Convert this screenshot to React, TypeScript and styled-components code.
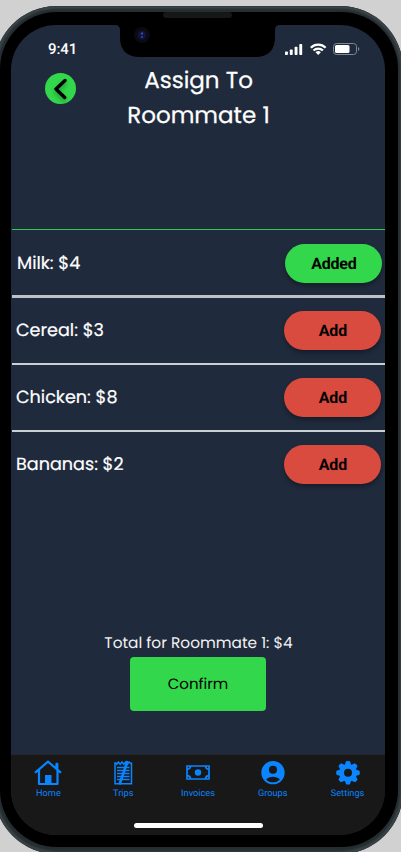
import React from 'react';
import styled, { createGlobalStyle } from 'styled-components';

const GlobalStyle = createGlobalStyle`
  * { box-sizing: border-box; }
  body { margin: 0; background: #d1d1d1; overflow: hidden; text-rendering: geometricPrecision; }
  button { border: 0; padding: 0; margin: 0; cursor: pointer; text-rendering: inherit; }
`;

const geometric = `font-family: Poppins, Inter, sans-serif;`;

const Page = styled.div`
  width: 401px;
  height: 852px;
  overflow: hidden;
  background: #d1d1d1;
  padding-top: 6px;
`;
const Shell = styled.div`
  width: 409px;
  height: 848px;
  margin-left: -6px;
  padding: 6px;
  border-radius: 63px;
  background: #252d30;
  box-shadow: inset 0 0 0 1px #353d40, inset 0 0 3px 2px #475255;
`;
const Bezel = styled.div`
  position: relative;
  width: 398px;
  height: 835px;
  border-radius: 57px;
  background: #000;
  padding: 13px 12px 12px 11px;
`;
const Screen = styled.div`
  width: 374px;
  height: 810px;
  border-radius: 45px;
  overflow: hidden;
  background: #1f2a3c;
  display: flex;
  flex-direction: column;
`;
const Notch = styled.svg`
  position: absolute;
  left: 114px;
  top: 0;
`;
const StatusBar = styled.div`
  display: flex;
  justify-content: space-between;
  height: 48px;
  padding: 16px 25px 0 37px;
`;
const Time = styled.span`
  font: 500 15px/17px Roboto, sans-serif;
  letter-spacing: -0.1px;
  color: #fff;
`;
const Header = styled.header`
  display: flex;
  height: 156px;
  align-items: flex-start;
`;
const BackButton = styled.button`
  width: 31px;
  height: 31px;
  margin-left: 34px;
  border-radius: 50%;
  background: #32d74b;
  flex: none;
  svg { display: block; filter: drop-shadow(0 3px 2px rgba(0, 0, 0, 0.3)); }
`;
const Title = styled.h1`
  ${geometric}
  width: 240px;
  margin: -9px 0 0 2.5px;
  text-align: center;
  color: #fff;
  font-size: 23px;
  font-weight: 400;
  line-height: 35px;
  -webkit-text-stroke: 0.25px #fff;
`;
const List = styled.ul`
  list-style: none;
  margin: 0 0 0 1px;
  padding: 0;
`;
const Row = styled.li<{ $line: string; $thick: number; $height: number; $shift: number }>`
  display: flex;
  justify-content: space-between;
  align-items: flex-start;
  height: ${p => p.$height}px;
  border-top: ${p => p.$thick}px solid ${p => p.$line};
  padding: ${p => 13 + p.$shift}px ${p => 3.6 - p.$shift}px 0 ${p => 4 + p.$shift}px;
`;
const ItemName = styled.span`
  ${geometric}
  color: #fff;
  font-size: 17.6px;
  font-weight: 400;
  line-height: 41px;
  -webkit-text-stroke: 0.2px #fff;
`;
const Pill = styled.button<{ $added: boolean }>`
  width: 97px;
  height: 38.5px;
  border-radius: 20px;
  background: ${p => (p.$added ? '#32d74b' : '#d94a3f')};
  box-shadow: 0 3px 4px rgba(0, 0, 0, 0.3);
  color: #000;
  font: 700 16px/37px Roboto, sans-serif;
  letter-spacing: -0.2px;
`;
const Summary = styled.div`
  display: flex;
  flex-direction: column;
  align-items: center;
  margin-top: auto;
  height: 125px;
`;
const Total = styled.p`
  ${geometric}
  margin: 0;
  padding: 1px 0 0 1px;
  font-size: 15.35px;
  line-height: 27px;
  height: 26px;
  color: #f2f2f2;
  white-space: nowrap;
`;
const Confirm = styled.button`
  ${geometric}
  width: 136px;
  height: 54px;
  margin-top: 2px;
  padding: 1px 0 0;
  border-radius: 4px;
  background: #32d74b;
  font-size: 15px;
  color: #000;
`;
const TabBar = styled.nav`
  display: flex;
  flex-wrap: wrap;
  flex: none;
  align-content: flex-start;
  height: 81px;
  background: #181818;
  border-top: 1px solid #252628;
`;
const Tab = styled.a`
  display: flex;
  flex-direction: column;
  align-items: center;
  width: 20%;
  height: 68px;
  padding: 4px 0 0;
  font: 400 9.2px/12px Roboto, sans-serif;
  color: #0a84ff;
  svg { display: block; margin-bottom: 1px; }
`;
const HomeIndicator = styled.div`
  width: 129px;
  height: 5px;
  margin: 0 auto;
  border-radius: 3px;
  background: #fff;
`;

const items = [
  { name: 'Milk: $4', added: true, line: '#32c84b', thick: 1, height: 66, shift: 1 },
  { name: 'Cereal: $3', added: false, line: '#bfc1c8', thick: 3, height: 68, shift: 0 },
  { name: 'Chicken: $8', added: false, line: '#c8d0d4', thick: 2, height: 67, shift: 0 },
  { name: 'Bananas: $2', added: false, line: '#c8d0d4', thick: 2, height: 67, shift: 0 },
];

const HomeIcon = () => (
  <svg width="28" height="28" viewBox="0 0 28 28" fill="none" stroke="#0a84ff" strokeWidth="2.2" strokeLinejoin="round" strokeLinecap="round">
    <path d="M1.7 13.2 14 2.7 26.3 13.2M5 11v14h18.5V11M22.5 9V4.8h.8V11" />
    <path d="M11 25.5v-9.5h6.5v9.5z" fill="#0a84ff" stroke="none" />
  </svg>
);
const TripsIcon = () => (
  <svg width="28" height="28" viewBox="0 0 28 28" fill="none" stroke="#0a84ff" strokeWidth="1.5">
    <path d="M6 3.5v21.3h16.500V3.5" />
    <path d="M6 3.2l1.7 2 1.7-2.2 1.8 2.2L13 3l1.8 2.2L16.6 3l1.8 2.2L20.2 3l2.3 2.2" />
    <path d="M8 8.5h12.500M8 11.5h12.500M8 14.5h12.500M8 17.5h12.500M8 20.5h12.500" />
    <path d="M18.5 2 10.5 25.5" strokeWidth="2.6" />
  </svg>
);
const InvoicesIcon = () => (
  <svg width="28" height="28" viewBox="0 0 28 28" fill="none" stroke="#0a84ff" strokeWidth="1.7">
    <path d="M3 7h22v13H3z" />
    <path d="M3 10.3a3.500 3.500 0 0 0 3.500-3.300M21.500 7a3.500 3.500 0 0 0 3.500 3.300M3 16.700a3.500 3.500 0 0 1 3.500 3.300M21.500 20a3.500 3.500 0 0 1 3.500-3.300" />
    <circle cx="14" cy="13.5" r="3.2" fill="#0a84ff" stroke="none" />
  </svg>
);
const GroupsIcon = () => (
  <svg width="28" height="28" viewBox="0 0 24 24" fill="#0a84ff">
    <path d="M12 1.700C6.480 1.700 2 6.200 2 11.700s4.480 10 10 10 10-4.480 10-10-4.480-10-10-10zm0 4a3.500 3.500 0 1 1 0 7 3.500 3.500 0 0 1 0-7zM12 20c-2.300 0-4.400-.95-5.900-2.500C7.300 15.900 10 15.200 12 15.200s4.700.7 5.900 2.300A8 8 0 0 1 12 20z" />
  </svg>
);
const SettingsIcon = () => (
  <svg width="28" height="28" viewBox="0 0 28 28">
    <g fill="#0a84ff">
      {[0, 45, 90, 135].map(a => (
        <path key={a} d="M10.800 6 12 2.200Q14 1.600 16 2.200L17.200 6v15.500L16 25.300Q14 25.900 12 25.300L10.800 21.500z" transform={`rotate(${a} 14 13.750)`} />
      ))}
      <circle cx="14" cy="13.75" r="8.8" />
    </g>
    <circle cx="14" cy="13.75" r="4" fill="#181818" />
  </svg>
);
const tabs = [
  { label: 'Home', Icon: HomeIcon },
  { label: 'Trips', Icon: TripsIcon },
  { label: 'Invoices', Icon: InvoicesIcon },
  { label: 'Groups', Icon: GroupsIcon },
  { label: 'Settings', Icon: SettingsIcon },
];

const StatusIcons = () => (
  <svg width="75" height="15" viewBox="0 0 75 15" fill="#fff">
    <rect x="0" y="10.5" width="2.9" height="3.5" rx="0.8" />
    <rect x="4.8" y="8.5" width="2.9" height="5.5" rx="0.8" />
    <rect x="9.6" y="5.8" width="2.9" height="8.2" rx="0.8" />
    <rect x="14.3" y="3" width="2.9" height="11" rx="0.8" />
    <g fill="none" stroke="#fff" strokeWidth="2.2">
      <path d="M25.8 6.7a10.5 10.5 0 0 1 14.8 0" />
      <path d="M28.5 9.5a6.6 6.6 0 0 1 9.4 0" />
    </g>
    <path d="m33.2 14-2.7-2.7a4 4 0 0 1 5.400 0z" />
    <rect x="48.5" y="2.5" width="23" height="11" rx="3" fill="none" stroke="#7f8792" />
    <rect x="50" y="4" width="14.5" height="8" rx="1.5" />
    <path d="M73 6v4q1.3-.6 1.3-2T73 6" fill="#7f8792" />
  </svg>
);

export default function App() {
  return (
    <Page>
      <GlobalStyle />
      <Shell>
        <Bezel>
          <Screen>
            <StatusBar>
              <Time>9:41</Time>
              <StatusIcons />
            </StatusBar>
            <Header>
              <BackButton aria-label="Back">
                <svg width="31" height="31" viewBox="0 0 31 31" fill="none" stroke="#000" strokeWidth="3.4" strokeLinecap="round" strokeLinejoin="round">
                  <path d="M20 7.5 11 16l8.7 8.5" />
                </svg>
              </BackButton>
              <Title>Assign To<br />Roommate 1</Title>
            </Header>
            <List>
              {items.map(i => (
                <Row key={i.name} $line={i.line} $thick={i.thick} $height={i.height} $shift={i.shift}>
                  <ItemName>{i.name}</ItemName>
                  <Pill $added={i.added}>{i.added ? 'Added' : 'Add'}</Pill>
                </Row>
              ))}
            </List>
            <Summary>
              <Total>Total for Roommate 1: $4</Total>
              <Confirm>Confirm</Confirm>
            </Summary>
            <TabBar>
              {tabs.map(({ label, Icon }) => (
                <Tab key={label}><Icon />{label}</Tab>
              ))}
              <HomeIndicator />
            </TabBar>
          </Screen>
          <Notch width="168" height="46" viewBox="0 0 168 46">
            <path d="M0 0h168v13h-2q-5 0-5 5v7q0 20-20 20H26Q6 45 6 25v-7q0-5-5-5H0z" fill="#000" />
            <rect x="49" y="0" width="69" height="6" rx="3" fill="#161717" />
            <circle cx="28" cy="23" r="8" fill="#0a0a10" />
            <circle cx="28" cy="23" r="4.5" fill="#10133a" />
            <circle cx="28" cy="21.5" r="1.2" fill="#354a9b" />
            <circle cx="28" cy="25" r="1.2" fill="#293c99" />
          </Notch>
        </Bezel>
      </Shell>
    </Page>
  );
}
